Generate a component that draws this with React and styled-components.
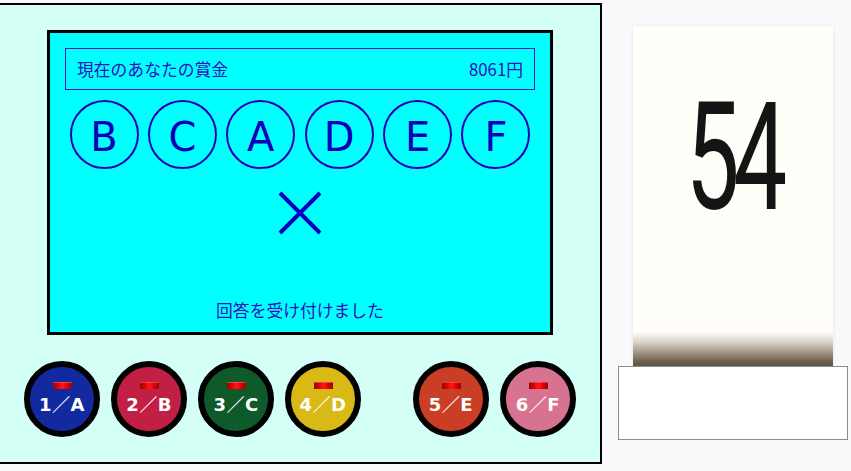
import React from 'react';
import styled, { createGlobalStyle } from 'styled-components';

const GlobalStyle = createGlobalStyle`
  html, body {
    margin: 0;
    padding: 0;
    background: #f9f9fb;
    font-family: "Noto Sans CJK JP", "DejaVu Sans", sans-serif;
  }
  * { box-sizing: border-box; }
`;

const Page = styled.div`
  display: flex;
  align-items: flex-start;
  width: 851px;
  height: 471px;
  overflow: hidden;
`;

const Panel = styled.div`
  width: 604px;
  height: 461px;
  margin: 3px 0 0 -2px;
  border: 2px solid #000;
  background: #d4fff7;
  display: flex;
  flex-direction: column;
  align-items: center;
  padding-top: 25px;
`;

const Screen = styled.div`
  width: 506px;
  height: 305px;
  border: 3px solid #000;
  background: #00ffff;
  display: flex;
  flex-direction: column;
  align-items: center;
  padding: 15px 15px 12px;
  color: #2a10b8;
`;

const PrizeBox = styled.div`
  width: 100%;
  height: 42px;
  border: 1px solid #3a10c8;
  display: flex;
  align-items: center;
  justify-content: space-between;
  padding: 0 11px;
  font-size: 16.8px;
`;

const ChoiceRow = styled.div`
  display: flex;
  gap: 9.4px;
  margin-top: 10px;
`;

const Choice = styled.div`
  width: 69px;
  height: 69px;
  border-radius: 50%;
  border: 2px solid #2400b8;
  display: flex;
  align-items: center;
  justify-content: center;
  padding-top: 4px;
  font-family: "DejaVu Sans", sans-serif;
  font-size: 40px;
  color: #1000b8;
`;

const Mark = styled.svg`
  margin-top: 22px;
  width: 44px;
  height: 44px;
`;

const Message = styled.div`
  margin-top: auto;
  font-size: 16.8px;
  line-height: 20px;
`;

const ButtonRow = styled.div`
  display: flex;
  gap: 11px;
  margin-top: 26px;
`;

const Spacer = styled.div`
  width: 30px;
`;

const Buzzer = styled.div`
  width: 76px;
  height: 76px;
  border-radius: 50%;
  border: 6px solid #000;
  background: ${p => p.$color};
  display: flex;
  flex-direction: column;
  align-items: center;
  padding-top: 15px;
  color: #fff;
  font-family: "DejaVu Sans", "Noto Sans CJK JP", sans-serif;
  font-weight: bold;
  font-size: 18px;
  line-height: 20px;
  letter-spacing: 0.5px;
  white-space: nowrap;
`;

const Lamp = styled.div`
  width: 19px;
  height: 7px;
  background: linear-gradient(to right, #8a0808, #e00000 25%, #ff1818 50%, #e00000 75%, #8a0808);
  box-shadow: inset 0 1px 0 rgba(255, 120, 120, 0.5);
  margin-bottom: 6px;
`;

const Side = styled.div`
  display: flex;
  flex-direction: column;
  align-items: center;
  margin-left: 16px;
  padding-top: 26px;
`;

const Card = styled.div`
  width: 200px;
  height: 340px;
  background: linear-gradient(to bottom, #fffef8 0, #fffef8 306px, #d8d4c8 316px, #a59888 326px, #6e5c4a 336px, #5e5650 340px);
  box-shadow: 0 0 4px rgba(0, 0, 0, 0.08);
  display: flex;
  justify-content: center;
  padding-top: 57px;
`;

const Number = styled.div`
  font-family: Roboto, "DejaVu Sans", sans-serif;
  font-weight: 400;
  font-size: 150px;
  line-height: 1;
  color: #141414;
  letter-spacing: -10px;
  transform: scaleX(0.64);
  height: 150px;
`;

const AnswerBox = styled.div`
  width: 230px;
  height: 74px;
  background: #fff;
  border: 1px solid #8c8c8c;
`;

const choices = ['B', 'C', 'A', 'D', 'E', 'F'];

const buzzers = [
  { label: '1／A', color: '#1229a0' },
  { label: '2／B', color: '#c21f45' },
  { label: '3／C', color: '#0f5a2b' },
  { label: '4／D', color: '#d9b915' },
  { label: '5／E', color: '#c93e25' },
  { label: '6／F', color: '#d77391' },
];

const App = () => (
  <>
    <GlobalStyle />
    <Page>
      <Panel>
        <Screen>
          <PrizeBox>
            <span>現在のあなたの賞金</span>
            <span>8061円</span>
          </PrizeBox>
          <ChoiceRow>
            {choices.map(c => (
              <Choice key={c}>{c}</Choice>
            ))}
          </ChoiceRow>
          <Mark viewBox="0 0 44 44">
            <path d="M2 2 L42 42 M42 2 L2 42" stroke="#0a00c0" strokeWidth="4" fill="none" />
          </Mark>
          <Message>回答を受け付けました</Message>
        </Screen>
        <ButtonRow>
          {buzzers.map((b, i) => (
            <React.Fragment key={b.label}>
              {i === 4 && <Spacer />}
              <Buzzer $color={b.color}>
                <Lamp />
                {b.label}
              </Buzzer>
            </React.Fragment>
          ))}
        </ButtonRow>
      </Panel>
      <Side>
        <Card>
          <Number>54</Number>
        </Card>
        <AnswerBox />
      </Side>
    </Page>
  </>
);

export default App;
